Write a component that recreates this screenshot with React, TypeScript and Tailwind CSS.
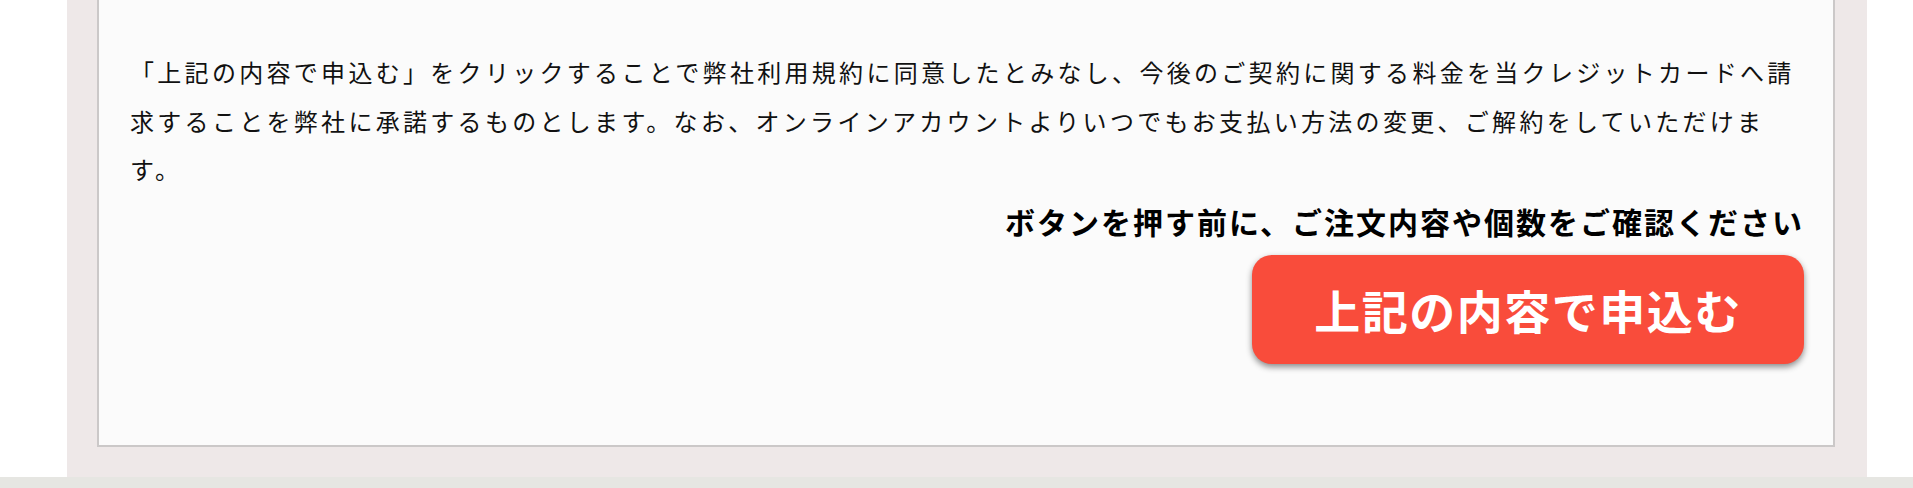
import React from 'react';

const font = "font-['Noto_Sans_CJK_JP','Noto_Sans',sans-serif]";

const App: React.FC = () => {
  return (
    <div className={`min-h-screen bg-white flex flex-col ${font}`}>
      <div className="flex">
        <div className="w-[67px] shrink-0" />
        <div className="w-[1800px] shrink-0 bg-[#eee8e8] pl-[30px] pr-[32px] pb-[30px]">
          <div className="bg-[#fbfbfb] border-2 border-t-0 border-[#cbc8c8] pt-[48px] pl-[31px] pr-[29px] pb-[81px]">
            <p className="w-[1680px] text-[24px] leading-[48.5px] tracking-[3.3px] text-[#111]">
              「上記の内容で申込む」をクリックすることで弊社利用規約に同意したとみなし、今後のご契約に関する料金を当クレジットカードへ請求することを弊社に承諾するものとします。なお、オンラインアカウントよりいつでもお支払い方法の変更、ご解約をしていただけます。
            </p>
            <div className="mt-[7.5px] text-right text-[30px] leading-[40px] font-bold tracking-[2px] text-black">
              ボタンを押す前に、ご注文内容や個数をご確認ください
            </div>
            <div className="mt-[14px] flex justify-end">
              <button
                type="button"
                className="w-[552px] h-[109px] rounded-[20px] bg-[#f94c3b] text-white text-[46px] font-bold tracking-[1.5px] shadow-[0_3px_6px_rgba(0,0,0,0.45)]"
              >
                上記の内容で申込む
              </button>
            </div>
          </div>
        </div>
      </div>
      <div className="flex-1 bg-[#e6e6e2]" />
    </div>
  );
};

export default App;
